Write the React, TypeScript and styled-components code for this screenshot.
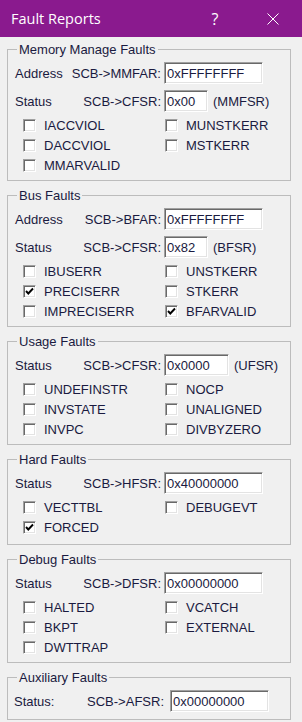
import React from "react";
import styled, { createGlobalStyle } from "styled-components";

const GlobalStyle = createGlobalStyle`
  html, body { margin: 0; padding: 0; background: #f0f0f0; }
  body {
    font-family: "Liberation Sans", Arial, sans-serif;
    font-size: 13px;
    color: #1a1a40;
    width: 302px;
    height: 722px;
    overflow: hidden;
  }
`;

const Window = styled.div`
  width: 302px;
  height: 722px;
  background: #f0f0f0;
  display: flex;
  flex-direction: column;
`;

const TitleBar = styled.div`
  height: 37px;
  flex-shrink: 0;
  background: #8a1a8e;
  color: #ffffff;
  display: flex;
  align-items: center;
`;

const Title = styled.div`
  flex: 1;
  padding-left: 11px;
  font-family: "Open Sans", "Noto Sans", sans-serif;
  font-size: 14.5px;
`;

const CaptionButton = styled.div`
  width: 58px;
  height: 37px;
  display: flex;
  align-items: center;
  justify-content: center;
  font-family: "Open Sans", "Noto Sans", sans-serif;
  font-size: 16px;
`;

const Content = styled.div`
  padding: 5px 11px 0 7px;
  display: flex;
  flex-direction: column;
  gap: 7px;
`;

const Group = styled.fieldset<{ $bottom?: number }>`
  margin: 0;
  padding: 0 0 ${(p) => p.$bottom ?? 5}px 0;
  border: 1px solid #bcbcbc;
  min-width: 0;
`;

const Legend = styled.legend`
  margin-left: 9px;
  padding: 0 2px;
  line-height: 15px;
`;

const GroupBody = styled.div<{ $top?: number }>`
  display: flex;
  flex-direction: column;
  padding-top: ${(p) => p.$top ?? 5}px;
`;

const FieldRow = styled.div<{ $labelW: number; $regW: number; $pad: number; $inGap: number }>`
  display: grid;
  grid-template-columns: ${(p) => p.$labelW}px ${(p) => p.$regW}px auto auto;
  justify-content: start;
  align-items: center;
  height: 22px;
  padding-left: ${(p) => p.$pad}px;
  & + & { margin-top: 6px; }
  & > input { margin-left: ${(p) => p.$inGap}px; }
`;

const RowLabel = styled.span`
  white-space: nowrap;
`;

const RegLabel = styled.span`
  text-align: right;
  white-space: nowrap;
`;

const Field = styled.input<{ $w: number }>`
  box-sizing: border-box;
  width: ${(p) => p.$w}px;
  height: 22px;
  margin: 0;
  padding: 0 0 0 2px;
  font-family: "Liberation Sans", Arial, sans-serif;
  font-size: 13px;
  color: #1a1a40;
  background: #ffffff;
  border-style: solid;
  border-width: 1px;
  border-color: #a0a0a0 #ffffff #ffffff #a0a0a0;
  box-shadow: inset 1px 1px 0 #696969, inset -1px -1px 0 #e3e3e3;
  outline: none;
`;

const Suffix = styled.span`
  margin-left: 5px;
  white-space: nowrap;
`;

const CheckGrid = styled.div`
  display: grid;
  grid-template-columns: 142px 1fr;
  grid-auto-rows: 20px;
  padding-left: 15px;
  margin-top: 3px;
`;

const CheckItem = styled.label`
  display: flex;
  align-items: center;
  gap: 8px;
  white-space: nowrap;
`;

const Box = styled.span`
  box-sizing: border-box;
  width: 13px;
  height: 13px;
  flex-shrink: 0;
  background: #ffffff;
  border-style: solid;
  border-width: 1px;
  border-color: #a0a0a0 #ffffff #ffffff #a0a0a0;
  box-shadow: inset 1px 1px 0 #696969, inset -1px -1px 0 #e3e3e3;
  display: flex;
  align-items: center;
  justify-content: center;
`;

type Check = { name: string; checked?: boolean };
type Row = { label: string; reg: string; value: string; width: number; suffix?: string };
type GroupData = {
  title: string;
  rows: Row[];
  checks: Check[];
  aux?: boolean;
  bottom?: number;
};

const groups: GroupData[] = [
  {
    title: "Memory Manage Faults",
    rows: [
      { label: "Address", reg: "SCB->MMFAR:", value: "0xFFFFFFFF", width: 99 },
      { label: "Status", reg: "SCB->CFSR:", value: "0x00", width: 44, suffix: "(MMFSR)" },
    ],
    checks: [
      { name: "IACCVIOL" },
      { name: "MUNSTKERR" },
      { name: "DACCVIOL" },
      { name: "MSTKERR" },
      { name: "MMARVALID" },
    ],
  },
  {
    title: "Bus Faults",
    rows: [
      { label: "Address", reg: "SCB->BFAR:", value: "0xFFFFFFFF", width: 99 },
      { label: "Status", reg: "SCB->CFSR:", value: "0x82", width: 44, suffix: "(BFSR)" },
    ],
    checks: [
      { name: "IBUSERR" },
      { name: "UNSTKERR" },
      { name: "PRECISERR", checked: true },
      { name: "STKERR" },
      { name: "IMPRECISERR" },
      { name: "BFARVALID", checked: true },
    ],
  },
  {
    title: "Usage Faults",
    rows: [{ label: "Status", reg: "SCB->CFSR:", value: "0x0000", width: 65, suffix: "(UFSR)" }],
    checks: [
      { name: "UNDEFINSTR" },
      { name: "NOCP" },
      { name: "INVSTATE" },
      { name: "UNALIGNED" },
      { name: "INVPC" },
      { name: "DIVBYZERO" },
    ],
  },
  {
    title: "Hard Faults",
    rows: [{ label: "Status", reg: "SCB->HFSR:", value: "0x40000000", width: 99 }],
    checks: [{ name: "VECTTBL" }, { name: "DEBUGEVT" }, { name: "FORCED", checked: true }],
    bottom: 7,
  },
  {
    title: "Debug Faults",
    rows: [{ label: "Status", reg: "SCB->DFSR:", value: "0x00000000", width: 99 }],
    checks: [
      { name: "HALTED" },
      { name: "VCATCH" },
      { name: "BKPT" },
      { name: "EXTERNAL" },
      { name: "DWTTRAP" },
    ],
  },
  {
    title: "Auxiliary Faults",
    rows: [{ label: "Status:", reg: "SCB->AFSR:", value: "0x00000000", width: 99 }],
    checks: [],
    aux: true,
    bottom: 7,
  },
];

const CheckMark = () => (
  <svg width="9" height="9" viewBox="0 0 9 9">
    <path d="M1 4 L3.3 6.5 L8 1.5" fill="none" stroke="#000" strokeWidth="1.9" />
  </svg>
);

const HelpGlyph = () => <span>?</span>;

const CloseIcon = () => (
  <svg width="12" height="12" viewBox="0 0 12 12">
    <path d="M0.5 0.5 L11.5 11.5 M11.5 0.5 L0.5 11.5" stroke="#fff" strokeWidth="1" />
  </svg>
);

export default function App() {
  return (
    <>
      <GlobalStyle />
      <Window>
        <TitleBar>
          <Title>Fault Reports</Title>
          <CaptionButton>
            <HelpGlyph />
          </CaptionButton>
          <CaptionButton>
            <CloseIcon />
          </CaptionButton>
        </TitleBar>
        <Content>
          {groups.map((g) => (
            <Group key={g.title} $bottom={g.bottom}>
              <Legend>{g.title}</Legend>
              <GroupBody>
                {g.rows.map((r) => (
                  <FieldRow
                    key={r.reg + r.label}
                    $labelW={g.aux ? 56 : 55}
                    $regW={g.aux ? 94 : 91}
                    $pad={g.aux ? 6 : 7}
                    $inGap={g.aux ? 6 : 3}
                  >
                    <RowLabel>{r.label}</RowLabel>
                    <RegLabel>{r.reg}</RegLabel>
                    <Field $w={r.width} readOnly value={r.value} />
                    {r.suffix ? <Suffix>{r.suffix}</Suffix> : <span />}
                  </FieldRow>
                ))}
                {g.checks.length > 0 && (
                  <CheckGrid>
                    {g.checks.map((c) => (
                      <CheckItem key={c.name}>
                        <Box>{c.checked && <CheckMark />}</Box>
                        {c.name}
                      </CheckItem>
                    ))}
                  </CheckGrid>
                )}
              </GroupBody>
            </Group>
          ))}
        </Content>
      </Window>
    </>
  );
}
